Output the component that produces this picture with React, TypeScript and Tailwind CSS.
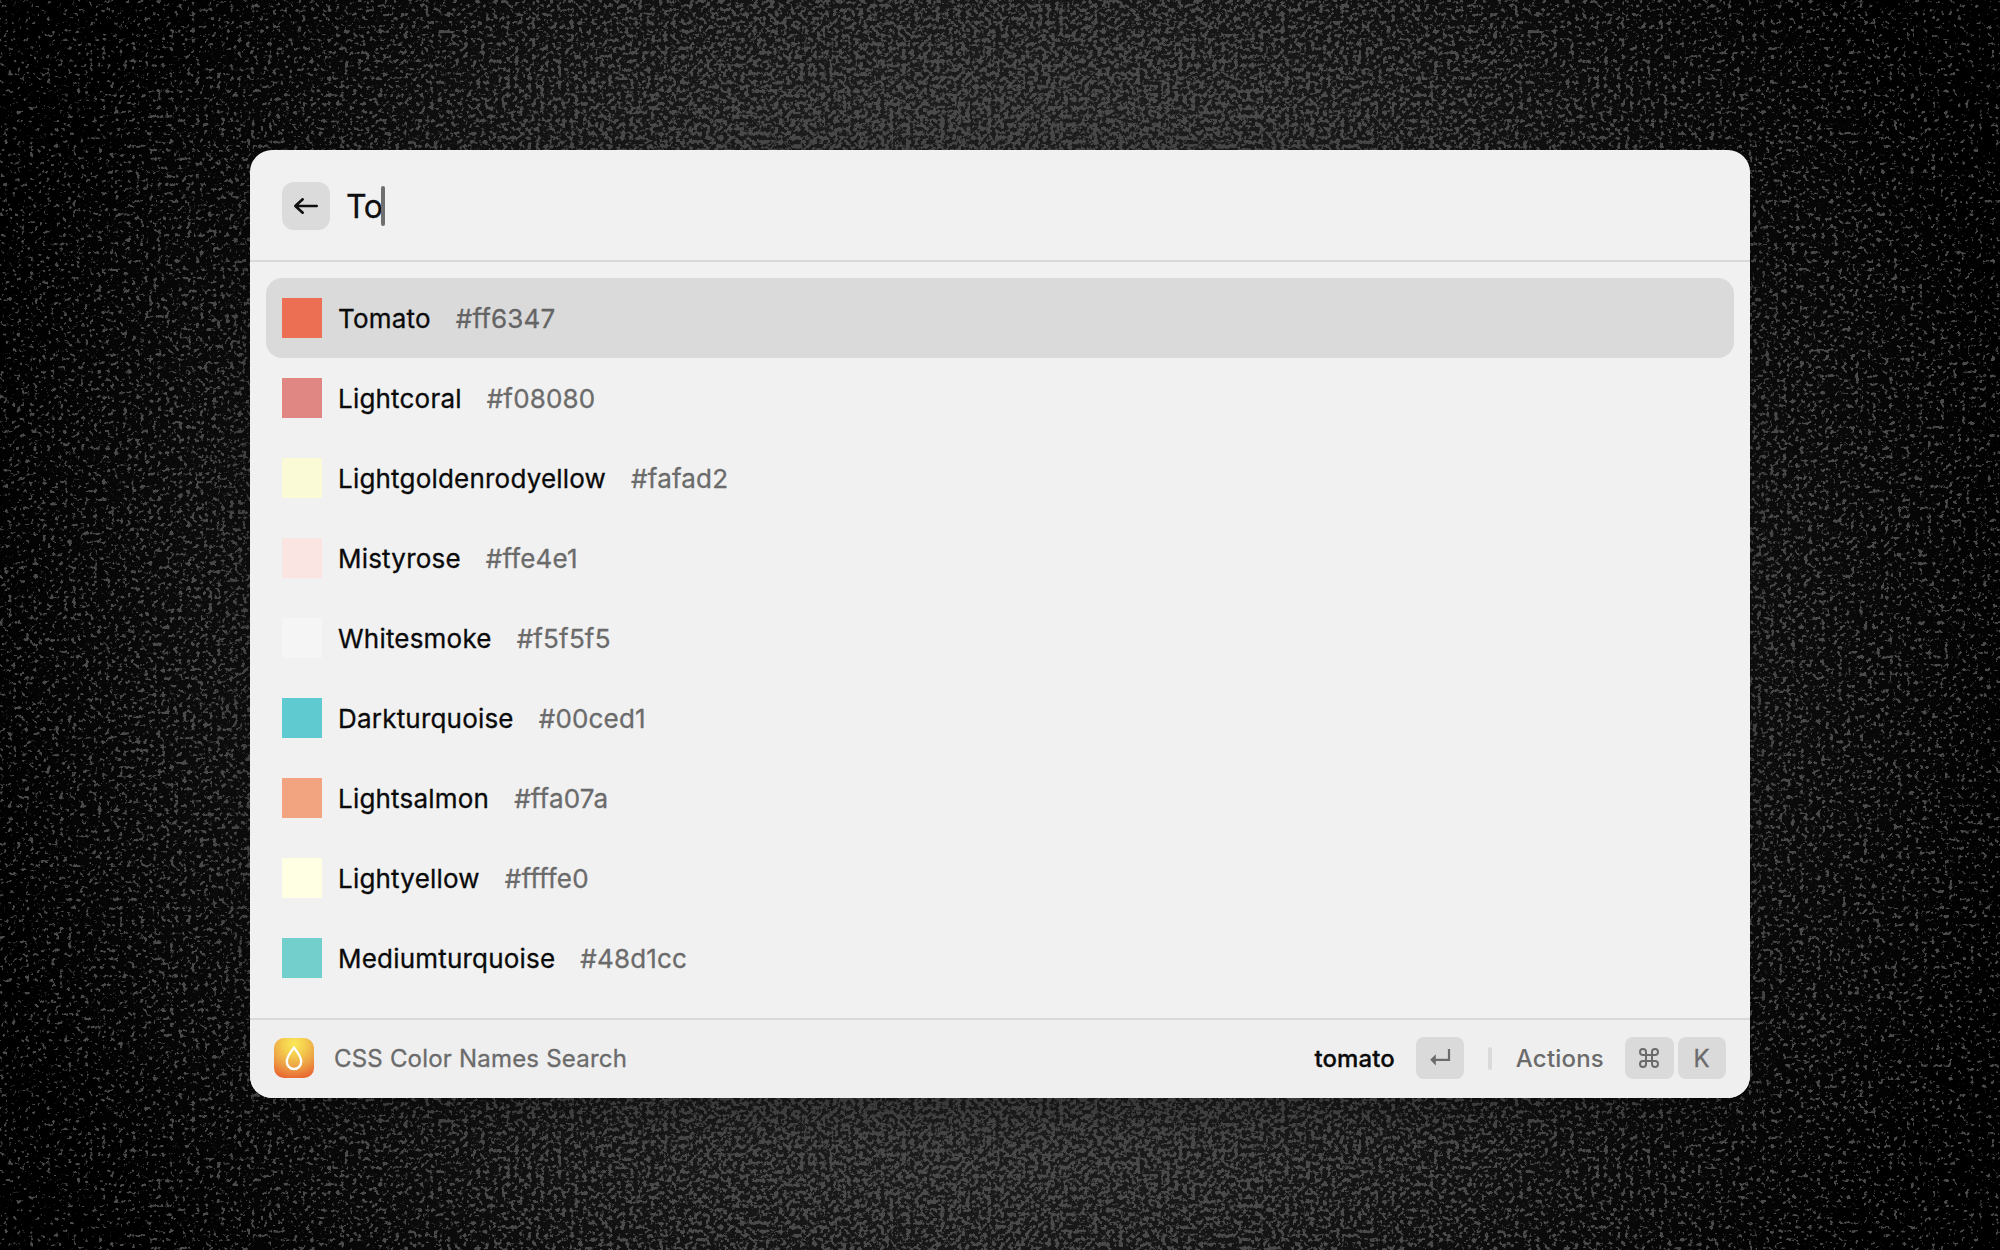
const colors = [
  { name: "Tomato", hex: "#ff6347", swatch: "#ed6f53" },
  { name: "Lightcoral", hex: "#f08080", swatch: "#e08683" },
  { name: "Lightgoldenrodyellow", hex: "#fafad2", swatch: "#fafad7" },
  { name: "Mistyrose", hex: "#ffe4e1", swatch: "#fae5e2" },
  { name: "Whitesmoke", hex: "#f5f5f5", swatch: "#f5f5f5" },
  { name: "Darkturquoise", hex: "#00ced1", swatch: "#5fcbd0" },
  { name: "Lightsalmon", hex: "#ffa07a", swatch: "#f2a481" },
  { name: "Lightyellow", hex: "#ffffe0", swatch: "#ffffe4" },
  { name: "Mediumturquoise", hex: "#48d1cc", swatch: "#73cfcb" },
];

function Backdrop() {
  return (
    <svg className="absolute inset-0 size-full" viewBox="0 0 2000 1250" preserveAspectRatio="none" aria-hidden="true">
      <defs>
        <radialGradient id="base" gradientUnits="userSpaceOnUse" cx="1000" cy="625" r="1050">
          <stop offset="0" stopColor="#262626" />
          <stop offset="0.5" stopColor="#1d1d1d" />
          <stop offset="0.8" stopColor="#0a0a0a" />
          <stop offset="1" stopColor="#000000" />
        </radialGradient>
        <radialGradient id="density" gradientUnits="userSpaceOnUse" cx="1000" cy="625" r="1180">
          <stop offset="0" stopColor="#fff" stopOpacity="1" />
          <stop offset="0.42" stopColor="#fff" stopOpacity="0.95" />
          <stop offset="0.7" stopColor="#fff" stopOpacity="0.52" />
          <stop offset="1" stopColor="#fff" stopOpacity="0.22" />
        </radialGradient>
        <filter id="grain" x="0" y="0" width="100%" height="100%" colorInterpolationFilters="sRGB">
          <feTurbulence type="fractalNoise" baseFrequency="0.235" numOctaves="3" seed="11" result="noise" />
          <feColorMatrix in="noise" type="matrix" values="0 0 0 0 1  0 0 0 0 1  0 0 0 0 1  0.75 0.25 0 0 0" result="mask" />
          <feComposite in="mask" in2="SourceGraphic" operator="arithmetic" k1="0" k2="1" k3="0.22" k4="0" result="sum" />
          <feComponentTransfer in="sum" result="cut">
            <feFuncA type="linear" slope="12" intercept="-8" />
          </feComponentTransfer>
          <feFlood floodColor="#4b4b4b" />
          <feComposite in2="cut" operator="in" />
        </filter>
      </defs>
      <rect width="2000" height="1250" fill="url(#base)" />
      <rect width="2000" height="1250" fill="url(#density)" filter="url(#grain)" />
    </svg>
  );
}

function AppIcon() {
  return (
    <svg className="size-10" viewBox="0 0 40 40" fill="none" aria-hidden="true">
      <defs>
        <radialGradient id="drop" gradientUnits="userSpaceOnUse" cx="20" cy="6" r="36">
          <stop offset="0" stopColor="#fbe957" />
          <stop offset="0.3" stopColor="#f5cf4e" />
          <stop offset="0.65" stopColor="#eca045" />
          <stop offset="1" stopColor="#e8622f" />
        </radialGradient>
      </defs>
      <rect width="40" height="40" rx="10" fill="url(#drop)" />
      <path
        d="M20 9.6C17.2 13.6 12.8 18.3 12.8 23.4C12.8 27.7 16 31 20 31C24 31 27.2 27.7 27.2 23.4C27.2 18.3 22.8 13.6 20 9.6Z"
        stroke="#fff"
        strokeWidth="2.4"
        strokeLinejoin="round"
      />
    </svg>
  );
}

export default function App() {
  return (
    <main className="relative flex h-[1250px] w-[2000px] justify-center overflow-hidden bg-black pt-[150px] font-['Inter',sans-serif]">
      <Backdrop />
      <section className="relative flex h-[948px] w-[1500px] flex-col overflow-hidden rounded-[22px] bg-[#f1f1f1] shadow-[0_16px_48px_rgba(0,0,0,0.3)]">
        <header className="flex h-28 items-center border-b-2 border-[#d9d9d9] pt-0.5 pl-8">
          <button className="flex size-12 items-center justify-center rounded-xl bg-[#dbdbdb]" aria-label="Back">
            <svg className="size-12" viewBox="0 0 48 48" fill="none" stroke="#0f0f0f" strokeWidth="2.6" strokeLinecap="round" strokeLinejoin="round">
              <path d="M34.7 24H13.5M20.7 17.3L13.3 24L20.7 30.7" />
            </svg>
          </button>
          <div className="flex items-center pl-4">
            <span className="pt-0.5 text-[32px] leading-10 tracking-[-0.4px] text-[#0f0f0f] [-webkit-text-stroke:0.3px]">To</span>
            <span className="-ml-[1.5px] h-10 w-1 rounded-sm bg-[#6f6f6f]" />
          </div>
        </header>

        <ul className="flex-1 px-4 pt-4">
          {colors.map((color, index) => (
            <li
              key={color.name}
              className={
                index === 0
                  ? "flex h-20 items-center rounded-2xl bg-[#dadada] pl-4 text-[#646464]"
                  : "flex h-20 items-center rounded-2xl pl-4 text-[#6b6b6b]"
              }
            >
              <span className="size-10" style={{ backgroundColor: color.swatch }} />
              <span className="ml-4 pt-0.5 text-[26px] leading-8 tracking-[0.2px] text-[#0a0a0a] [-webkit-text-stroke:0.3px]">{color.name}</span>
              <span className="ml-[25px] pt-0.5 text-[26px] leading-8 tracking-[0.18px] [-webkit-text-stroke:0.3px]">{color.hex}</span>
            </li>
          ))}
        </ul>

        <footer className="flex h-20 items-center bg-[#efefef] px-6 text-2xl font-medium text-[#6b6b6b] shadow-[inset_0_2px_0_#d9d9d9]">
          <AppIcon />
          <span className="ml-5 pt-0.5 font-normal tracking-[0.2px] [-webkit-text-stroke:0.3px]">CSS Color Names Search</span>
          <span className="ml-auto pt-0.5 tracking-[0.1px] text-[#0a0a0a] [-webkit-text-stroke:0.3px]">tomato</span>
          <kbd className="ml-[21px] flex h-[42px] w-12 items-center justify-center rounded-lg bg-[#dadada]">
            <svg className="h-[42px] w-12" viewBox="0 0 48 42" fill="none">
              <path d="M33 12V22.8H19" stroke="#6b6b6b" strokeWidth="2.2" />
              <path d="M14.2 22.8L19.8 17.2V28.4Z" fill="#6b6b6b" />
            </svg>
          </kbd>
          <span className="ml-6 h-[23px] w-1 rounded-full bg-[#dadada]" />
          <span className="ml-6 pt-0.5 tracking-[0.2px]">Actions</span>
          <kbd className="ml-[21px] flex h-[42px] w-[49px] items-center justify-center rounded-lg bg-[#dadada] pr-px">
            <svg className="size-5" viewBox="0 0 20 20" fill="none" stroke="#6b6b6b" strokeWidth="2">
              <path d="M7 7V4A3 3 0 1 0 4 7H16A3 3 0 1 0 13 4V16A3 3 0 1 0 16 13H4A3 3 0 1 0 7 16Z" />
            </svg>
          </kbd>
          <kbd className="ml-1 flex h-[42px] w-12 items-center justify-center rounded-lg bg-[#dadada] pt-0.5 pr-px font-['Inter',sans-serif] text-2xl font-normal [-webkit-text-stroke:0.3px]">K</kbd>
        </footer>
      </section>
    </main>
  );
}
